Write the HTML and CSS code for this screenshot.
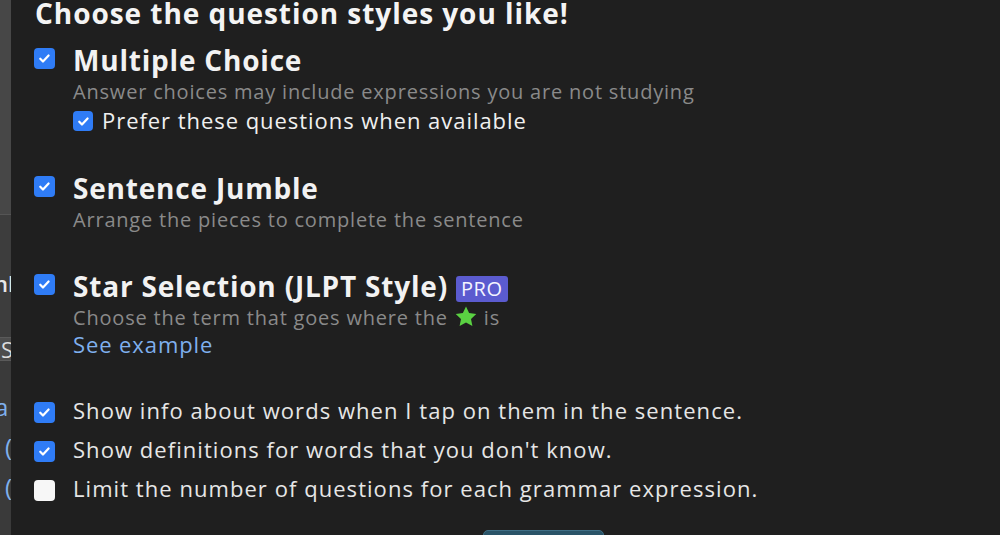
FILE: index.html
```html
<!DOCTYPE html>
<html lang="en">
<head>
<meta charset="utf-8">
<link rel="stylesheet" href="styles.css">
</head>
<body>
<div class="page">
  <aside class="behind">
    <div class="bh-top"></div>
    <div class="bh-mid"><span class="bh-word">nl</span></div>
    <div class="bh-box">S</div>
    <div class="bh-low">
      <span class="bh-link">a</span>
      <span class="bh-link">(</span>
      <span class="bh-link">(</span>
    </div>
  </aside>
  <main class="modal">
    <h2 class="heading">Choose the question styles you like!</h2>

    <section class="opt">
      <span class="cb on"><svg viewBox="0 0 20 20"><path d="M5 10.3l3.2 3.2 6.6-7" /></svg></span>
      <div class="opt-body">
        <div class="title">Multiple Choice</div>
        <div class="desc">Answer choices may include expressions you are not studying</div>
        <label class="sub"><span class="cb on small"><svg viewBox="0 0 20 20"><path d="M5 10.3l3.2 3.2 6.6-7" /></svg></span>Prefer these questions when available</label>
      </div>
    </section>

    <section class="opt opt-gap">
      <span class="cb on"><svg viewBox="0 0 20 20"><path d="M5 10.3l3.2 3.2 6.6-7" /></svg></span>
      <div class="opt-body">
        <div class="title">Sentence Jumble</div>
        <div class="desc">Arrange the pieces to complete the sentence</div>
      </div>
    </section>

    <section class="opt opt-gap">
      <span class="cb on"><svg viewBox="0 0 20 20"><path d="M5 10.3l3.2 3.2 6.6-7" /></svg></span>
      <div class="opt-body">
        <div class="title title-row">Star Selection (JLPT Style)<span class="pro">PRO</span></div>
        <div class="desc">Choose the term that goes where the <svg class="star" viewBox="0 0 24 24"><path d="M12 1.5l3.1 6.6 7.2.9-5.3 5 1.4 7.1L12 17.6l-6.4 3.5 1.4-7.1-5.3-5 7.2-.9z"/></svg> is</div>
        <a class="link" href="#">See example</a>
      </div>
    </section>

    <div class="prefs">
      <label class="pref"><span class="cb on"><svg viewBox="0 0 20 20"><path d="M5 10.3l3.2 3.2 6.6-7" /></svg></span>Show info about words when I tap on them in the sentence.</label>
      <label class="pref"><span class="cb on"><svg viewBox="0 0 20 20"><path d="M5 10.3l3.2 3.2 6.6-7" /></svg></span>Show definitions for words that you don't know.</label>
      <label class="pref"><span class="cb off"></span>Limit the number of questions for each grammar expression.</label>
    </div>

    <button class="save" type="button"></button>
  </main>
</div>
</body>
</html>
```

FILE: styles.css
```css
* { box-sizing: border-box; }
html, body {
  margin: 0;
  padding: 0;
  height: 100%;
  background: #1f1f1f;
  overflow: hidden;
}
body {
  font-family: "Open Sans", "Noto Sans", sans-serif;
}
.page {
  display: flex;
  height: 535px;
  overflow: hidden;
}
.behind {
  width: 11px;
  flex: none;
  display: flex;
  flex-direction: column;
  overflow: hidden;
  background: #3a3a3a;
}
.bh-top {
  height: 215px;
  flex: none;
  background: #474747;
  border-bottom: 1px solid #555;
}
.bh-mid {
  height: 122px;
  flex: none;
  background: #3d3d3d;
  padding-top: 55px;
}
.bh-word {
  display: block;
  color: #e8e8e8;
  font-size: 22px;
  line-height: 26px;
  margin-left: -6px;
  font-weight: 600;
}
.bh-box {
  height: 24px;
  flex: none;
  background: #4d4d4d;
  border-top: 1px solid #5a5a5a;
  border-bottom: 1px solid #5a5a5a;
  color: #ddd;
  font-size: 22px;
  line-height: 22px;
  padding-left: 1px;
}
.bh-low {
  flex: 1;
  display: flex;
  flex-direction: column;
  padding-top: 26px;
}
.bh-link {
  color: #7fb0ee;
  font-size: 24px;
  line-height: 40px;
  margin-left: -5px;
}
.bh-link + .bh-link { margin-left: 5px; }

.modal {
  flex: 1;
  padding: 0 0 0 24px;
  display: flex;
  flex-direction: column;
  align-items: flex-start;
  color: #f2f2f2;
}
.heading {
  margin: -4px 0 0;
  font-size: 28px;
  line-height: 34px;
  font-weight: 700;
  letter-spacing: 0.95px;
  color: #f4f4f4;
  white-space: nowrap;
}
.opt {
  display: flex;
  align-items: flex-start;
  margin-top: 13px;
}
.opt-gap { margin-top: 36px; }
.cb {
  flex: none;
  width: 21px;
  height: 21px;
  border-radius: 4px;
  display: inline-flex;
  align-items: center;
  justify-content: center;
}
.cb svg {
  width: 17px;
  height: 17px;
  fill: none;
  stroke: #fff;
  stroke-width: 2.6;
  stroke-linecap: round;
  stroke-linejoin: round;
}
.cb.on { background: #2f7cf6; }
.cb.off { background: #f7f7f7; }
.opt > .cb { margin-top: 5px; margin-left: -1px; }
.opt-body {
  margin-left: 18px;
  display: flex;
  flex-direction: column;
  align-items: flex-start;
}
.title {
  font-size: 28px;
  line-height: 34px;
  font-weight: 700;
  letter-spacing: 0.8px;
  color: #f2f2f2;
  white-space: nowrap;
}
.title-row {
  display: flex;
  align-items: flex-start;
}
.pro {
  margin: 7px 0 0 8px;
  height: 26px;
  padding: 0 5px;
  background: #5b5bcf;
  border-radius: 3px;
  color: #f4f4ff;
  font-size: 20px;
  font-weight: 400;
  letter-spacing: 0.6px;
  line-height: 26px;
}
.desc {
  margin-top: 2px;
  font-size: 20px;
  line-height: 26px;
  letter-spacing: 0.8px;
  color: #8a8a8a;
  white-space: nowrap;
}
.star {
  width: 24px;
  height: 24px;
  fill: #5ad142;
  vertical-align: -4px;
}
.sub {
  display: flex;
  align-items: center;
  font-size: 22px;
  line-height: 30px;
  letter-spacing: 0.95px;
  color: #f0f0f0;
  white-space: nowrap;
}
.sub .cb {
  width: 20px;
  height: 20px;
  margin-right: 9px;
  margin-top: 2px;
}
.link {
  margin-top: -2px;
  font-size: 22px;
  line-height: 30px;
  letter-spacing: 0.9px;
  color: #7fb0ee;
  text-decoration: none;
}
.prefs {
  margin-top: 32px;
  display: flex;
  flex-direction: column;
}
.pref {
  display: flex;
  align-items: center;
  height: 39px;
  font-size: 22px;
  line-height: 39px;
  letter-spacing: 1.05px;
  color: #e6e6e6;
  white-space: nowrap;
}
.pref .cb {
  margin-left: -1px;
  margin-right: 18px;
  margin-top: 3px;
}
.save {
  margin: 22px 0 0 448px;
  width: 121px;
  height: 40px;
  flex: none;
  background: #2a5468;
  border: 1px solid #3f6f86;
  border-radius: 5px;
}
```
